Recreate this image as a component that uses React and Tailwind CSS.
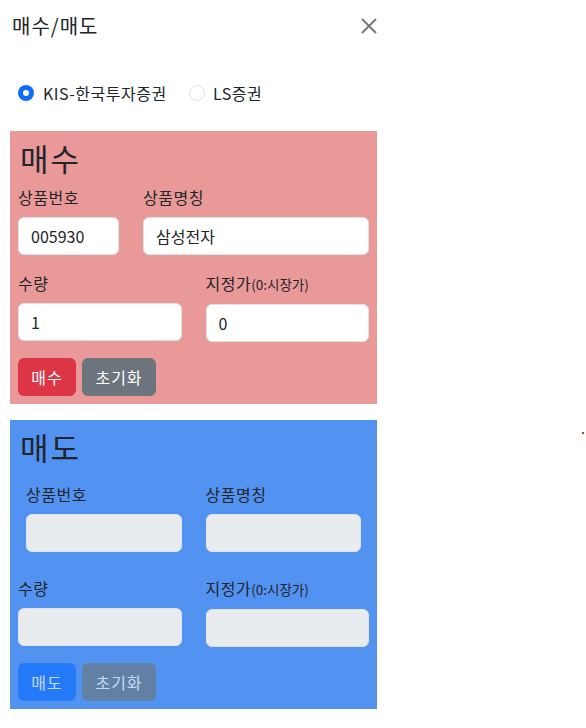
import React from 'react';

const font = { fontFamily: '"Noto Sans CJK KR", "Noto Sans", sans-serif' };

function Field({ label, small, value, disabled }) {
  return (
    <div className="flex flex-col min-w-0">
      <label className="text-[16px] leading-6 mb-2 text-[#212529] whitespace-nowrap tracking-[0.5px]">
        {label}
        {small && <span className="text-[13.5px] tracking-normal">{small}</span>}
      </label>
      <input
        readOnly
        disabled={disabled}
        defaultValue={value}
        className={
          'h-[38px] w-full rounded-[6px] border border-[#dee2e6] px-3 text-[16px] text-[#212529] outline-none ' +
          (disabled ? 'bg-[#e9ecef]' : 'bg-white')
        }
      />
    </div>
  );
}

function Btn({ children, color, w, dim }) {
  return (
    <button
      className={
        'h-[38px] rounded-[6px] text-white text-[16px] tracking-[1px] flex items-center justify-center ' +
        color + ' ' + w + (dim ? ' opacity-65' : '')
      }
    >
      {children}
    </button>
  );
}

export default function App() {
  return (
    <div className="relative w-[586px] h-[728px] bg-white overflow-hidden" style={font}>
      <div className="w-[389px]">
        {/* header */}
        <div className="flex items-center justify-between pl-3 pr-3 pt-[11px]">
          <h5 className="text-[20px] leading-[30px] text-[#212529] tracking-[1px]">매수/매도</h5>
          <button className="w-4 h-4 flex items-center justify-center">
            <svg width="16" height="16" viewBox="0 0 16 16">
              <path d="M1 1L15 15M15 1L1 15" stroke="#777" strokeWidth="2" />
            </svg>
          </button>
        </div>

        <div className="pl-[10px] pr-3">
          {/* radios */}
          <div className="flex items-center pl-2 mt-10 text-[16px] leading-6 text-[#212529]">
            <label className="flex items-center gap-[9px] w-[171px] tracking-[0.5px]">
              <span className="w-4 h-4 rounded-full bg-[#0d6efd] flex items-center justify-center">
                <span className="w-[6px] h-[6px] rounded-full bg-white" />
              </span>
              KIS-한국투자증권
            </label>
            <label className="flex items-center gap-[8px] tracking-[0.5px]">
              <span className="w-4 h-4 rounded-full border border-[#dee2e6] bg-white" />
              LS증권
            </label>
          </div>

          {/* 매수 */}
          <div className="mt-[26px] bg-[#ea9999] p-2">
            <h1 className="text-[31px] leading-[38px] mb-2 pl-[2px] text-[#212529] tracking-[2px]">매수</h1>
            <div className="grid grid-cols-[101px_1fr] gap-x-6">
              <Field label="상품번호" value="005930" />
              <Field label="상품명칭" value="삼성전자" />
            </div>
            <div className="grid grid-cols-2 gap-x-6 mt-4">
              <Field label="수량" value="1" />
              <Field label="지정가" small="(0:시장가)" value="0" />
            </div>
            <div className="flex gap-[6px] mt-4">
              <Btn color="bg-[#dc3545]" w="w-[58px]">매수</Btn>
              <Btn color="bg-[#6c757d]" w="w-[74px]">초기화</Btn>
            </div>
          </div>

          {/* 매도 */}
          <div className="mt-4 bg-[#5292f0] p-2">
            <h1 className="text-[31px] leading-[38px] mb-2 pl-[2px] text-[#212529] tracking-[2px]">매도</h1>
            <div className="grid grid-cols-2 gap-x-6 p-2">
              <Field label="상품번호" disabled />
              <Field label="상품명칭" disabled />
            </div>
            <div className="grid grid-cols-2 gap-x-6 mt-4">
              <Field label="수량" disabled />
              <Field label="지정가" small="(0:시장가)" disabled />
            </div>
            <div className="flex gap-[6px] mt-4">
              <Btn color="bg-[#0d6efd]" w="w-[58px]" dim>매도</Btn>
              <Btn color="bg-[#6c757d]" w="w-[74px]" dim>초기화</Btn>
            </div>
          </div>
        </div>
      </div>

      <span className="absolute left-[582px] top-[432px] w-[2px] h-[2px] bg-[#e02020]" />
    </div>
  );
}
